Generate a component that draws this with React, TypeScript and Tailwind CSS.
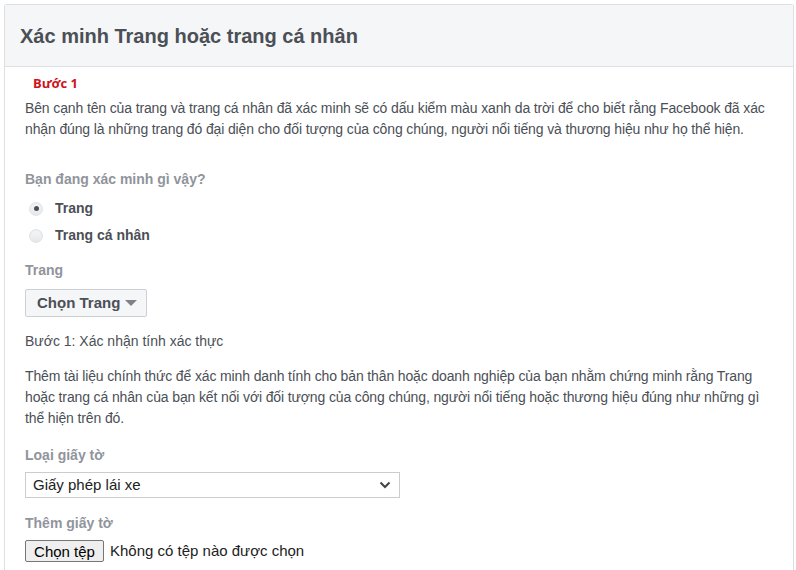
import React, { useState } from 'react';

const Radio: React.FC<{ checked: boolean; label: string; onClick: () => void }> = ({ checked, label, onClick }) => (
  <div className="flex items-center h-[27px] cursor-pointer" onClick={onClick}>
    <span className="w-[14px] h-[14px] ml-[4px] rounded-full border border-[#e3e4e6] bg-gradient-to-b from-[#f6f7f8] to-[#e6e7e9] flex items-center justify-center shadow-[inset_0_1px_1px_rgba(0,0,0,0.05)]">
      {checked && <span className="w-[5px] h-[5px] rounded-full bg-[#4b4f56]" />}
    </span>
    <span className="ml-[12px] text-[14px] font-bold text-[#4b4f56]">{label}</span>
  </div>
);

const App: React.FC = () => {
  const [kind, setKind] = useState('page');

  return (
    <div className="bg-white w-[796px] h-[570px] overflow-hidden pt-[4px] pl-[4px] font-['Liberation_Sans',Arial,sans-serif]">
      <div className="w-[790px] border border-[#dddfe2] border-b-0 rounded-t-[3px] bg-white h-[600px]">
        <div className="h-[62px] bg-[#f5f6f7] border-b border-[#dddfe2] flex items-center pl-[15px] pt-[1px]">
          <h1 className="text-[20px] font-bold text-[#4b4f56]">Xác minh Trang hoặc trang cá nhân</h1>
        </div>

        <div className="px-[20px]">
          <div className="pt-[8px] pl-[8px] text-[13px] leading-[16px] font-bold text-[#d0121b] font-['Open_Sans',sans-serif]">Bước 1</div>

          <p className="mt-[7px] text-[14px] leading-[21px] text-[#4b4f56] tracking-[-0.13px] whitespace-nowrap">
            Bên cạnh tên của trang và trang cá nhân đã xác minh sẽ có dấu kiểm màu xanh da trời để cho biết rằng Facebook đã xác
            <br />
            nhận đúng là những trang đó đại diện cho đối tượng của công chúng, người nổi tiếng và thương hiệu như họ thể hiện.
          </p>

          <div className="mt-[30px] text-[14px] leading-[18px] font-bold text-[#90949c]">Bạn đang xác minh gì vậy?</div>
          <div className="mt-[7px]">
            <Radio checked={kind === 'page'} label="Trang" onClick={() => setKind('page')} />
            <Radio checked={kind === 'profile'} label="Trang cá nhân" onClick={() => setKind('profile')} />
          </div>

          <div className="mt-[12px] text-[14px] leading-[18px] font-bold text-[#90949c]">Trang</div>
          <button className="mt-[10px] h-[28px] w-[122px] pl-[11px] flex items-center gap-[5px] bg-[#f5f6f7] border border-[#ccd0d5] rounded-[2px] text-[15px] font-bold text-[#4b4f56]">
            Chọn Trang
            <svg width="12" height="6" viewBox="0 0 12 6"><path d="M0 0h12L6 6z" fill="#7f8389" /></svg>
          </button>

          <div className="mt-[15px] text-[14px] leading-[18px] text-[#4b4f56]">Bước 1: Xác nhận tính xác thực</div>

          <p className="mt-[16px] text-[14px] leading-[21px] text-[#4b4f56] tracking-[-0.13px] whitespace-nowrap">
            Thêm tài liệu chính thức để xác minh danh tính cho bản thân hoặc doanh nghiệp của bạn nhằm chứng minh rằng Trang
            <br />
            hoặc trang cá nhân của bạn kết nối với đối tượng của công chúng, người nổi tiếng hoặc thương hiệu đúng như những gì
            <br />
            thể hiện trên đó.
          </p>

          <div className="mt-[17px] text-[14px] leading-[18px] font-bold text-[#90949c]">Loại giấy tờ</div>
          <div className="mt-[8px] w-[375px] h-[26px] border border-[#ccc] bg-white flex items-center justify-between pl-[7px] pr-[8px] text-[15px] text-[#222]">
            <span>Giấy phép lái xe</span>
            <svg width="12" height="8" viewBox="0 0 12 8"><path d="M1.5 1.5L6 6l4.5-4.5" fill="none" stroke="#444" strokeWidth="2" /></svg>
          </div>

          <div className="mt-[16px] text-[14px] leading-[18px] font-bold text-[#90949c]">Thêm giấy tờ</div>
          <div className="mt-[8px] flex items-center text-[15px] text-[#222]">
            <button className="h-[22px] w-[79px] bg-[#efefef] border border-[#767676] rounded-[2px] text-[15px] text-black">Chọn tệp</button>
            <span className="ml-[6px]">Không có tệp nào được chọn</span>
          </div>
        </div>
      </div>
    </div>
  );
};

export default App;
